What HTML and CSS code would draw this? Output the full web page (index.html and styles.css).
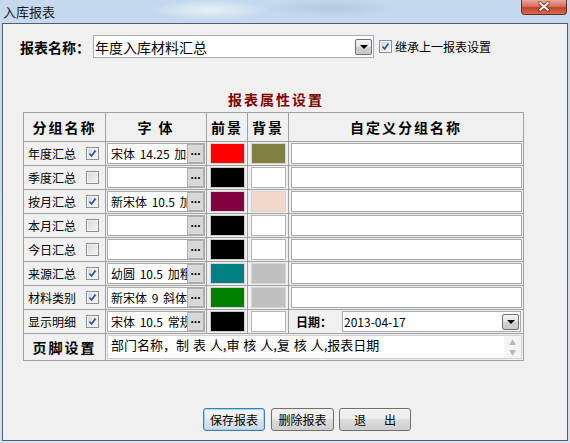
FILE: index.html
```html
<!DOCTYPE html>
<html lang="zh-CN">
<head>
    <meta charset="UTF-8">
    <title>入库报表</title>
    <link rel="stylesheet" href="styles.css">
</head>
<body>
<div class="window">
    <div class="titlebar">
        <span class="title">入库报表</span>
        <div class="close">
            <svg width="44" height="14" viewBox="0 0 44 14">
                <path d="M18 3 L26 10 M26 3 L18 10" stroke="#6a2a22" stroke-width="3.4" stroke-linecap="round"/>
                <path d="M18 3 L26 10 M26 3 L18 10" stroke="#ffffff" stroke-width="1.8" stroke-linecap="round"/>
            </svg>
        </div>
    </div>

    <div class="client">
        <!-- report name -->
        <div class="report-row">
            <span class="report-label">报表名称：</span>
            <div class="combo combo-report">
                <span class="combo-text">年度入库材料汇总</span>
                <span class="drop"></span>
            </div>
            <span class="cb on"><svg viewBox="0 0 9 9"><path d="M1.5 4.5 L3.6 7 L7.5 1.5" fill="none" stroke="#2c4f93" stroke-width="1.6"/></svg></span>
            <span class="inherit-label">继承上一报表设置</span>
        </div>

        <h2 class="section-title">报表属性设置</h2>

        <table class="grid">
            <colgroup>
                <col class="c-name">
                <col class="c-font">
                <col class="c-fg">
                <col class="c-bg">
                <col class="c-custom">
            </colgroup>
            <tr class="head">
                <th>分组名称</th>
                <th>字 体</th>
                <th>前景</th>
                <th>背景</th>
                <th>自定义分组名称</th>
            </tr>
            <tr>
                <td><div class="name">年度汇总<span class="cb on"><svg viewBox="0 0 9 9"><path d="M1.5 4.5 L3.6 7 L7.5 1.5" fill="none" stroke="#2c4f93" stroke-width="1.6"/></svg></span></div></td>
                <td><div class="font-box"><span class="font-text">宋体 14.25 加粗</span><span class="dots">...</span></div></td>
                <td><div class="swatch red"></div></td>
                <td><div class="swatch olive"></div></td>
                <td><div class="text-box"></div></td>
            </tr>
            <tr>
                <td><div class="name">季度汇总<span class="cb"></span></div></td>
                <td><div class="font-box"><span class="font-text"></span><span class="dots">...</span></div></td>
                <td><div class="swatch black"></div></td>
                <td><div class="swatch white"></div></td>
                <td><div class="text-box"></div></td>
            </tr>
            <tr>
                <td><div class="name">按月汇总<span class="cb on"><svg viewBox="0 0 9 9"><path d="M1.5 4.5 L3.6 7 L7.5 1.5" fill="none" stroke="#2c4f93" stroke-width="1.6"/></svg></span></div></td>
                <td><div class="font-box"><span class="font-text">新宋体 10.5 加粗</span><span class="dots">...</span></div></td>
                <td><div class="swatch maroon"></div></td>
                <td><div class="swatch peach"></div></td>
                <td><div class="text-box"></div></td>
            </tr>
            <tr>
                <td><div class="name">本月汇总<span class="cb"></span></div></td>
                <td><div class="font-box"><span class="font-text"></span><span class="dots">...</span></div></td>
                <td><div class="swatch black"></div></td>
                <td><div class="swatch white"></div></td>
                <td><div class="text-box"></div></td>
            </tr>
            <tr>
                <td><div class="name">今日汇总<span class="cb"></span></div></td>
                <td><div class="font-box"><span class="font-text"></span><span class="dots">...</span></div></td>
                <td><div class="swatch black"></div></td>
                <td><div class="swatch white"></div></td>
                <td><div class="text-box"></div></td>
            </tr>
            <tr>
                <td><div class="name">来源汇总<span class="cb on"><svg viewBox="0 0 9 9"><path d="M1.5 4.5 L3.6 7 L7.5 1.5" fill="none" stroke="#2c4f93" stroke-width="1.6"/></svg></span></div></td>
                <td><div class="font-box"><span class="font-text">幼圆 10.5 加粗</span><span class="dots">...</span></div></td>
                <td><div class="swatch teal"></div></td>
                <td><div class="swatch silver"></div></td>
                <td><div class="text-box"></div></td>
            </tr>
            <tr>
                <td><div class="name">材料类别<span class="cb on"><svg viewBox="0 0 9 9"><path d="M1.5 4.5 L3.6 7 L7.5 1.5" fill="none" stroke="#2c4f93" stroke-width="1.6"/></svg></span></div></td>
                <td><div class="font-box"><span class="font-text">新宋体 9 斜体</span><span class="dots">...</span></div></td>
                <td><div class="swatch green"></div></td>
                <td><div class="swatch silver"></div></td>
                <td><div class="text-box"></div></td>
            </tr>
            <tr>
                <td><div class="name">显示明细<span class="cb on"><svg viewBox="0 0 9 9"><path d="M1.5 4.5 L3.6 7 L7.5 1.5" fill="none" stroke="#2c4f93" stroke-width="1.6"/></svg></span></div></td>
                <td><div class="font-box"><span class="font-text">宋体 10.5 常规</span><span class="dots">...</span></div></td>
                <td><div class="swatch black"></div></td>
                <td><div class="swatch white"></div></td>
                <td>
                    <div class="date-cell">
                        <span class="date-label">日期：</span>
                        <div class="combo combo-date">
                            <span class="combo-text">2013-04-17</span>
                            <span class="drop"></span>
                        </div>
                    </div>
                </td>
            </tr>
            <tr class="foot">
                <th>页脚设置</th>
                <td colspan="4">
                    <div class="memo">
                        <span class="memo-text">部门名称，制 表 人,审 核 人,复 核 人,报表日期</span>
                        <span class="scroll"><span class="up">▲</span><span class="down">▼</span></span>
                    </div>
                </td>
            </tr>
        </table>

        <div class="buttons">
            <button class="btn btn-default">保存报表</button>
            <button class="btn">删除报表</button>
            <button class="btn btn-exit">退&emsp;&ensp;出</button>
        </div>
    </div>
</div>
</body>
</html>
```

FILE: styles.css
```css
* {
    margin: 0;
    padding: 0;
    box-sizing: border-box;
}

body {
    width: 570px;
    height: 443px;
    overflow: hidden;
    font-family: "Noto Sans CJK SC", sans-serif;
    font-size: 12px;
    color: #000;
}

/* window frame */
.window {
    width: 570px;
    height: 443px;
    display: flex;
    flex-direction: column;
    background:
        radial-gradient(ellipse 60px 10px at 210px 10px, rgba(255, 255, 255, 0.6), transparent),
        radial-gradient(ellipse 70px 9px at 330px 8px, rgba(150, 170, 190, 0.35), transparent),
        linear-gradient(#c4d9ee, #d2e2f3);
}

.titlebar {
    height: 23px;
    display: flex;
    align-items: flex-start;
}

.title {
    font-size: 13px;
    line-height: 15px;
    padding: 4px 0 0 3px;
    color: #1a1a1a;
}

.close {
    margin-left: auto;
    margin-right: 3px;
    width: 46px;
    height: 15px;
    border: 1px solid #6e2b23;
    border-top: none;
    border-radius: 0 0 4px 4px;
    background: linear-gradient(#eaa898, #d5705c 45%, #c2412b 55%, #d66e52);
}

.close svg {
    display: block;
}

.client {
    margin: 0 2px 2px 2px;
    height: 418px;
    border: 1px solid #515e6c;
    background-color: #f0f0f0;
}

/* report name row */
.report-row {
    display: flex;
    align-items: center;
    margin: 11px 0 0 17px;
    height: 23px;
}

.report-label {
    font-size: 14px;
    font-weight: bold;
    width: 73px;
}

.combo {
    display: flex;
    align-items: center;
    background: #fff;
    border: 1px solid #a5acb5;
}

.combo-report {
    width: 281px;
    height: 23px;
    padding-left: 1px;
}

.combo-report .combo-text {
    font-size: 14px;
}

.combo-text {
    flex: 1;
    white-space: nowrap;
    overflow: hidden;
}

.drop {
    width: 17px;
    height: 16px;
    margin-right: 1px;
    border: 1px solid #707070;
    border-radius: 2px;
    background: linear-gradient(#f4f4f4, #e2e2e2 50%, #d2d2d2 50%, #c8c8c8);
    display: flex;
    align-items: center;
    justify-content: center;
}

.drop::after {
    content: "";
    border-left: 4px solid transparent;
    border-right: 4px solid transparent;
    border-top: 4px solid #000;
    margin-top: 1px;
}

.cb {
    width: 13px;
    height: 13px;
    flex-shrink: 0;
    border: 1px solid #8e8f8f;
    padding: 1px;
    display: inline-flex;
    background: linear-gradient(135deg, #d2d4d6, #f8f8f8);
    box-shadow: inset 0 0 0 1px #f4f4f4;
}

.cb svg {
    width: 9px;
    height: 9px;
    display: block;
}

.report-row .cb {
    margin-left: 5px;
}

.inherit-label {
    margin-left: 3px;
    font-size: 12px;
}

/* section title */
.section-title {
    width: 500px;
    margin: 33px 0 0 20px;
    padding-left: 6px;
    text-align: center;
    font-size: 14px;
    line-height: 16px;
    letter-spacing: 2px;
    color: #800000;
    font-weight: bold;
}

/* grid */
.grid {
    margin: 5px 0 0 20px;
    width: 500px;
    table-layout: fixed;
    border-collapse: collapse;
}

.c-name { width: 82px; }
.c-font { width: 101px; }
.c-fg { width: 41px; }
.c-bg { width: 41px; }
.c-custom { width: 235px; }

.grid th,
.grid td {
    border: 1px solid #a0a0a0;
    padding: 1px;
    vertical-align: middle;
}

.grid th {
    font-size: 14px;
    font-weight: bold;
    letter-spacing: 2px;
    line-height: 26px;
    text-align: center;
}

.name {
    height: 21px;
    display: flex;
    align-items: center;
    gap: 10px;
    padding-left: 3px;
}

.font-box {
    height: 21px;
    display: flex;
    align-items: center;
    background: #fff;
    border: 1px solid #a9a9a9;
}

.font-text {
    flex: 1;
    min-width: 0;
    white-space: nowrap;
    overflow: hidden;
    padding-left: 3px;
    word-spacing: 2px;
}

.dots {
    flex-shrink: 0;
    width: 17px;
    height: 19px;
    background: #d8d8d8;
    border: 1px solid #b0b0b0;
    font-family: "Liberation Sans", sans-serif;
    font-weight: bold;
    font-size: 12px;
    line-height: 12px;
    text-align: center;
    overflow: hidden;
}

.swatch {
    height: 21px;
    margin: 0 1px 0 2px;
    border: 1px solid #b4b4b4;
}

.red { background-color: #ff0000; border-color: #d4d4d4; }
.olive { background-color: #808040; border-color: #d4d4d4; }
.black { background-color: #000000; border-color: #c8c8c8; }
.white { background-color: #ffffff; }
.maroon { background-color: #800040; border-color: #d4d4d4; }
.peach { background-color: #f2d8c8; border-color: #d4d4d4; }
.teal { background-color: #008080; border-color: #d4d4d4; }
.silver { background-color: #c0c0c0; border-color: #d4d4d4; }
.green { background-color: #008000; border-color: #d4d4d4; }

.text-box {
    height: 21px;
    margin-left: 1px;
    background: #fff;
    border: 1px solid #a9a9a9;
}

.date-cell {
    height: 21px;
    display: flex;
    align-items: center;
    padding-left: 6px;
}

.date-label {
    font-weight: bold;
    width: 46px;
}

.combo-date {
    width: 179px;
    height: 21px;
    padding-left: 1px;
}

.combo-date .drop {
    height: 16px;
}

.foot th {
    line-height: 24px;
}

.memo {
    height: 24px;
    display: flex;
    background: #fff;
    border: 1px solid #d0d0d0;
}

.memo-text {
    flex: 1;
    font-size: 13px;
    line-height: 17px;
    padding-left: 3px;
    white-space: nowrap;
    word-spacing: 1px;
}

.scroll {
    width: 17px;
    display: flex;
    flex-direction: column;
    justify-content: space-between;
    align-items: center;
    background: #f4f4f4;
    color: #b8b8b8;
    font-size: 7px;
    line-height: 10px;
    padding: 1px 0;
}

/* buttons */
.buttons {
    display: flex;
    margin: 47px 0 0 200px;
    gap: 5px;
}

.btn {
    height: 23px;
    width: 63px;
    font-family: "Noto Sans CJK SC", sans-serif;
    font-size: 12px;
    border: 1px solid #707070;
    border-radius: 3px;
    background: linear-gradient(#f2f2f2, #ebebeb 50%, #dddddd 50%, #cfcfcf);
    color: #000;
}

.btn-default {
    width: 62px;
    margin-right: 1px;
    border-color: #3c7fb1;
    box-shadow: inset 0 0 0 1px #9fd5f3;
    background: linear-gradient(#f2f2f2, #eaeff2 50%, #dde3e8 50%, #d1d8de);
}

.btn-exit {
    width: 72px;
}
```
